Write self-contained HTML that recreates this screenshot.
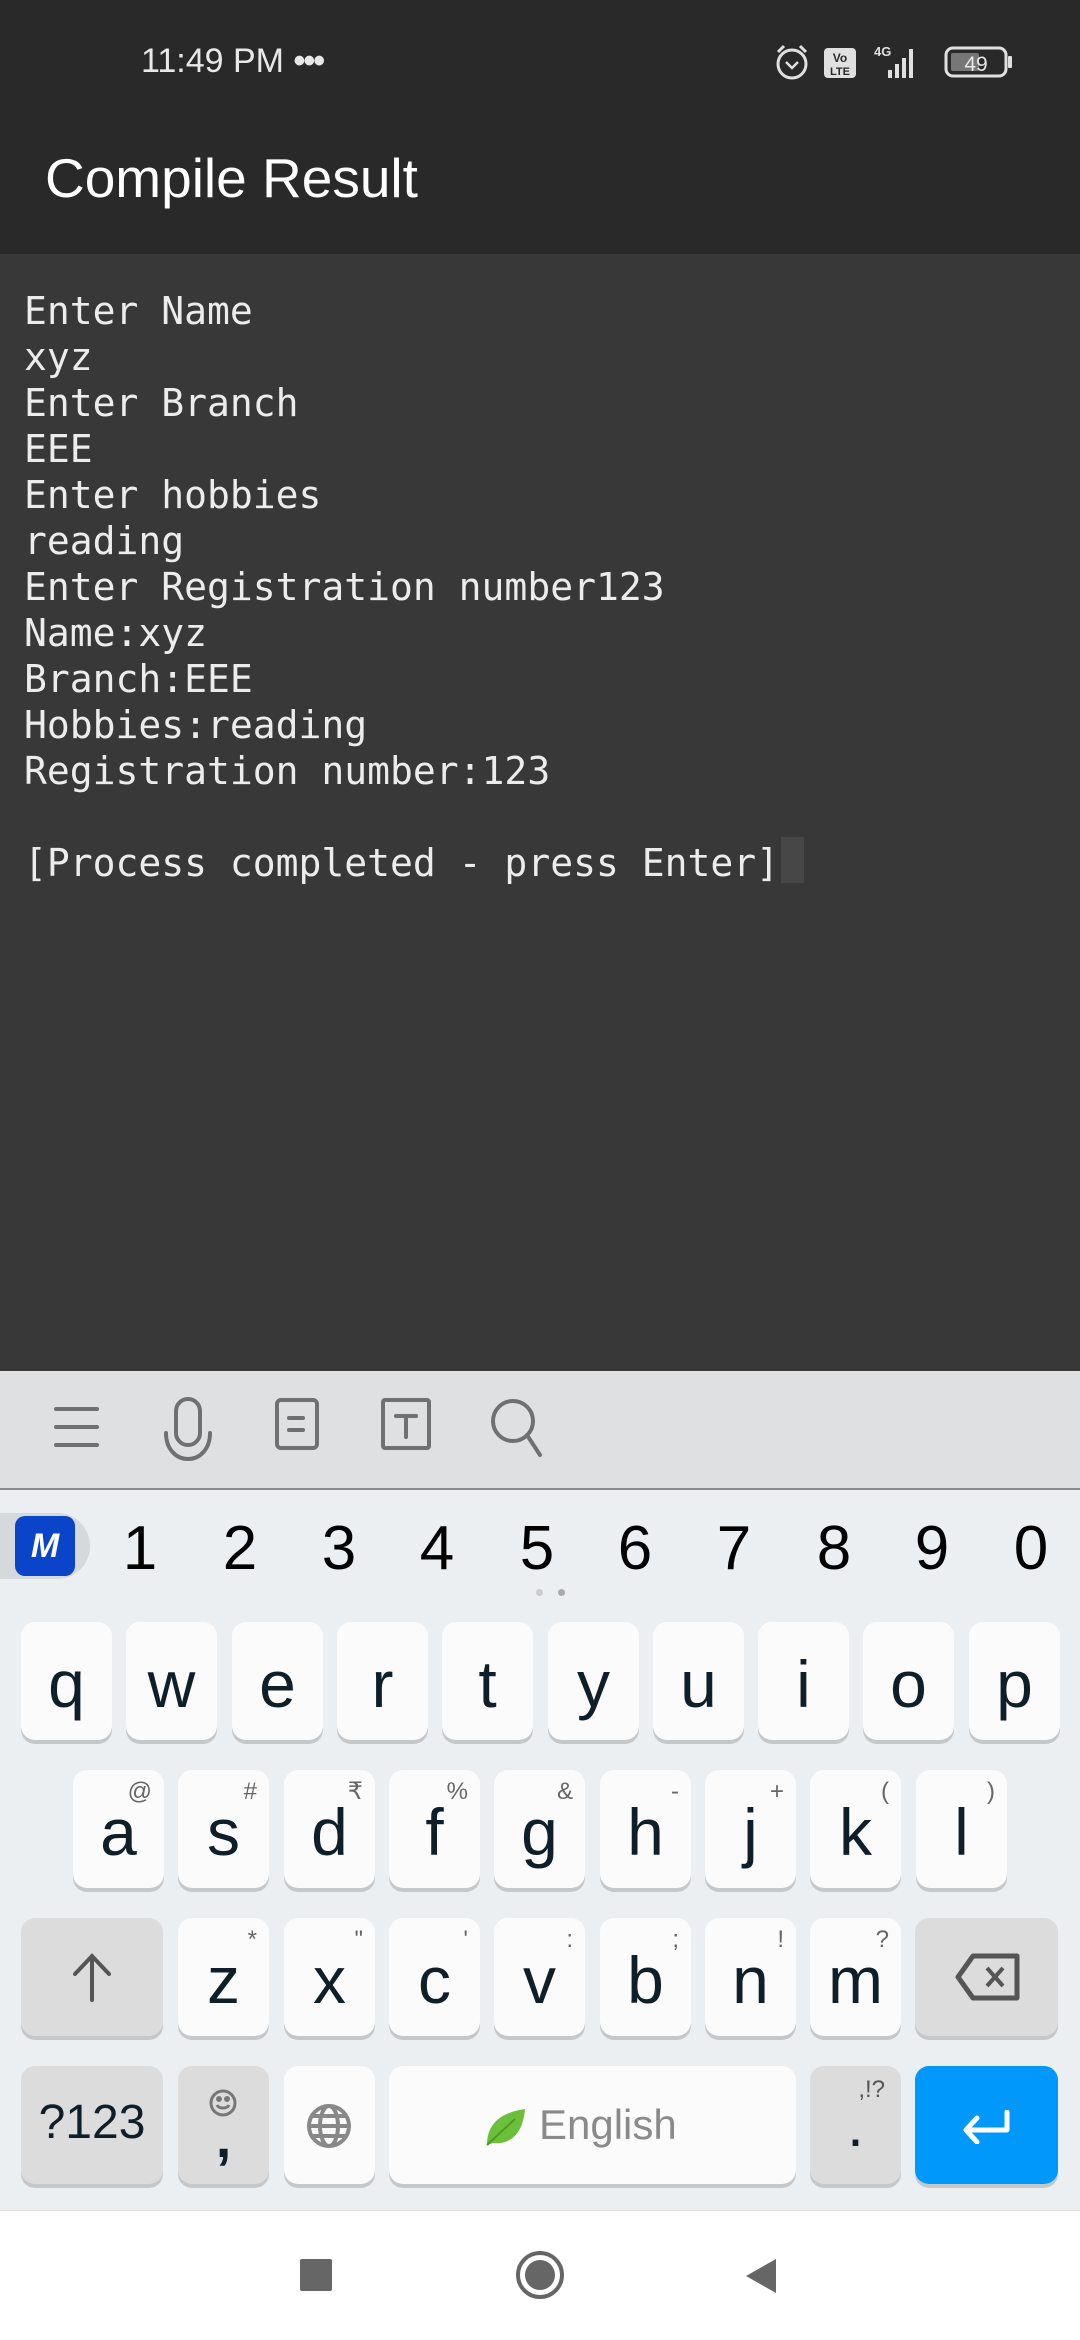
<!DOCTYPE html>
<html><head><meta charset="utf-8"><style>
*{margin:0;padding:0;box-sizing:border-box}
body{width:1080px;height:2340px;position:relative;overflow:hidden;background:#383838;font-family:"Liberation Sans",sans-serif}
.abs{position:absolute}
#hdr{left:0;top:0;width:1080px;height:254px;background:#292929}
#term{left:24px;top:288px;font-family:"DejaVu Sans Mono","Liberation Mono",monospace;font-size:38px;line-height:46px;color:#ececec;white-space:pre;letter-spacing:0}
#kb{left:0;top:1371px;width:1080px;height:839px;background:#ebeff2}
#tb{left:0;top:1371px;width:1080px;height:119px;background:#dfe0e2;border-bottom:2px solid #8a8a8a}
.k{position:absolute;width:91px;height:118px;background:#fbfbfb;border-radius:14px;box-shadow:0 4px 0 #c5c8cb;text-align:center;color:#0f1f2a;font-size:66px;line-height:1}
.k span.l{position:absolute;left:0;right:0;top:29px}
.k span.h{position:absolute;right:12px;top:10px;font-size:24px;color:#666}
.g{background:#dcdcdc}
.d{position:absolute;top:1513px;font-size:62px;color:#000;width:60px;text-align:center}
#nav{left:0;top:2210px;width:1080px;height:130px;background:#fff;border-top:1px solid #e0e0e0}
</style></head><body>
<div id="hdr" class="abs"></div>
<div class="abs" style="left:141px;top:42px;font-size:34px;color:#e8e8e8;">11:49 PM <span style="letter-spacing:-2px;font-weight:bold">•••</span></div>
<svg class="abs" style="left:770px;top:40px" width="250" height="45" viewBox="0 0 250 45">
 <circle cx="22" cy="24" r="14" fill="none" stroke="#e0e0e0" stroke-width="3"/>
 <path d="M16 22l6 6 6-6" fill="none" stroke="#e0e0e0" stroke-width="2.5"/>
 <path d="M8 12l6-6M36 12l-6-6" stroke="#e0e0e0" stroke-width="3"/>
 <rect x="54" y="8" width="32" height="30" rx="4" fill="#e0e0e0"/>
 <text x="70" y="22" font-size="12" text-anchor="middle" fill="#292929" font-weight="bold" font-family="Liberation Sans">Vo</text>
 <text x="70" y="35" font-size="11" text-anchor="middle" fill="#292929" font-weight="bold" font-family="Liberation Sans">LTE</text>
 <text x="104" y="16" font-size="13" fill="#e0e0e0" font-weight="bold" font-family="Liberation Sans">4G</text>
 <rect x="118" y="30" width="4" height="8" fill="#e0e0e0"/><rect x="125" y="24" width="4" height="14" fill="#e0e0e0"/><rect x="132" y="18" width="4" height="20" fill="#e0e0e0"/><rect x="139" y="9" width="4" height="29" fill="#e0e0e0"/>
 <rect x="176" y="8" width="60" height="28" rx="7" fill="none" stroke="#e0e0e0" stroke-width="3"/>
 <rect x="181" y="13" width="28" height="18" rx="2" fill="#777"/>
 <rect x="238" y="16" width="4" height="12" rx="1" fill="#e0e0e0"/>
 <text x="206" y="31" font-size="21" text-anchor="middle" fill="#e8e8e8" font-family="Liberation Sans">49</text>
</svg>
<div class="abs" style="left:45px;top:146px;font-size:55px;color:#fff;">Compile Result</div>
<div id="term" class="abs">Enter Name
xyz
Enter Branch
EEE
Enter hobbies
reading
Enter Registration number123
Name:xyz
Branch:EEE
Hobbies:reading
Registration number:123

[Process completed - press Enter]</div>
<div class="abs" style="left:781px;top:837px;width:23px;height:46px;background:#474747"></div>

<div id="kb" class="abs"></div>
<div id="tb" class="abs"></div>
<svg class="abs" style="left:0;top:1371px" width="600" height="119" viewBox="0 0 600 119" fill="none" stroke="#707070" stroke-width="4" stroke-linecap="round">
 <path d="M56 38h41M56 56h41M56 74h41"/>
 <rect x="176" y="28" width="24" height="46" rx="12"/>
 <path d="M166 62c0 16 10 26 22 26s22-10 22-26"/>
 <rect x="277" y="29" width="40" height="48" rx="4"/>
 <path d="M289 47h14M289 59h14"/>
 <rect x="383" y="29" width="46" height="48" rx="2"/>
 <path d="M396 45h20M406 45v21"/>
 <circle cx="513" cy="50" r="20"/>
 <path d="M527 64l13 20"/>
</svg>
<div class="abs" style="left:0;top:1513px;width:90px;height:66px;background:#d6d9dc;border-radius:0 33px 33px 0"></div>
<div class="abs" style="left:15px;top:1516px;width:60px;height:60px;background:#0a44c8;border-radius:10px;color:#fff;font-weight:bold;font-style:italic;font-size:34px;text-align:center;line-height:60px">M</div>
<div class="d" style="left:110px">1</div><div class="d" style="left:210px">2</div><div class="d" style="left:309px">3</div><div class="d" style="left:407px">4</div><div class="d" style="left:507px">5</div><div class="d" style="left:605px">6</div><div class="d" style="left:704px">7</div><div class="d" style="left:804px">8</div><div class="d" style="left:902px">9</div><div class="d" style="left:1001px">0</div>
<div class="abs" style="left:536px;top:1589px;width:7px;height:7px;border-radius:50%;background:#ccc"></div>
<div class="abs" style="left:558px;top:1589px;width:7px;height:7px;border-radius:50%;background:#aaa"></div>

<div class="k" style="left:21px;top:1622px"><span class="l">q</span></div>
<div class="k" style="left:126px;top:1622px"><span class="l">w</span></div>
<div class="k" style="left:232px;top:1622px"><span class="l">e</span></div>
<div class="k" style="left:337px;top:1622px"><span class="l">r</span></div>
<div class="k" style="left:442px;top:1622px"><span class="l">t</span></div>
<div class="k" style="left:548px;top:1622px"><span class="l">y</span></div>
<div class="k" style="left:653px;top:1622px"><span class="l">u</span></div>
<div class="k" style="left:758px;top:1622px"><span class="l">i</span></div>
<div class="k" style="left:863px;top:1622px"><span class="l">o</span></div>
<div class="k" style="left:969px;top:1622px"><span class="l">p</span></div>

<div class="k" style="left:73px;top:1770px"><span class="h">@</span><span class="l">a</span></div>
<div class="k" style="left:178px;top:1770px"><span class="h">#</span><span class="l">s</span></div>
<div class="k" style="left:284px;top:1770px"><span class="h">₹</span><span class="l">d</span></div>
<div class="k" style="left:389px;top:1770px"><span class="h">%</span><span class="l">f</span></div>
<div class="k" style="left:494px;top:1770px"><span class="h">&amp;</span><span class="l">g</span></div>
<div class="k" style="left:600px;top:1770px"><span class="h">-</span><span class="l">h</span></div>
<div class="k" style="left:705px;top:1770px"><span class="h">+</span><span class="l">j</span></div>
<div class="k" style="left:810px;top:1770px"><span class="h">(</span><span class="l">k</span></div>
<div class="k" style="left:916px;top:1770px"><span class="h">)</span><span class="l">l</span></div>

<div class="k g" style="left:21px;top:1918px;width:142px"><svg style="position:absolute;left:48px;top:34px" width="46" height="50" viewBox="0 0 46 50" fill="none" stroke="#555" stroke-width="4" stroke-linecap="round"><path d="M23 48V4M6 22L23 4l17 18"/></svg></div>
<div class="k" style="left:178px;top:1918px"><span class="h">*</span><span class="l">z</span></div>
<div class="k" style="left:284px;top:1918px"><span class="h">"</span><span class="l">x</span></div>
<div class="k" style="left:389px;top:1918px"><span class="h">'</span><span class="l">c</span></div>
<div class="k" style="left:494px;top:1918px"><span class="h">:</span><span class="l">v</span></div>
<div class="k" style="left:600px;top:1918px"><span class="h">;</span><span class="l">b</span></div>
<div class="k" style="left:705px;top:1918px"><span class="h">!</span><span class="l">n</span></div>
<div class="k" style="left:810px;top:1918px"><span class="h">?</span><span class="l">m</span></div>
<div class="k g" style="left:915px;top:1918px;width:143px"><svg style="position:absolute;left:38px;top:34px" width="70" height="50" viewBox="0 0 70 50" fill="none" stroke="#555" stroke-width="5" stroke-linejoin="round"><path d="M20 4h44v42H20L5 25z"/><path d="M34 16l16 18M50 16L34 34" stroke-width="4"/></svg></div>

<div class="k g" style="left:21px;top:2066px;width:142px"><span class="l" style="top:33px;font-size:48px">?123</span></div>
<div class="k g" style="left:178px;top:2066px"><svg style="position:absolute;left:30px;top:22px" width="30" height="30" viewBox="0 0 30 30" fill="none" stroke="#777" stroke-width="3"><circle cx="15" cy="15" r="12"/><path d="M9 17c2 4 10 4 12 0"/><circle cx="11" cy="11" r="1.5" fill="#777"/><circle cx="19" cy="11" r="1.5" fill="#777"/></svg><span class="l" style="top:44px;font-size:56px;font-weight:bold">,</span></div>
<div class="k" style="left:284px;top:2066px"><svg style="position:absolute;left:22px;top:37px" width="46" height="46" viewBox="0 0 46 46" fill="none" stroke="#888" stroke-width="4"><circle cx="23" cy="23" r="20"/><ellipse cx="23" cy="23" rx="9" ry="20"/><path d="M3 23h40M6 13h34M6 33h34"/></svg></div>
<div class="k" style="left:389px;top:2066px;width:407px"><svg style="position:absolute;left:96px;top:41px" width="42" height="40" viewBox="0 0 42 40"><path d="M2 38C2 20 12 6 40 2 38 26 26 38 8 36z" fill="#6cbf3a"/><path d="M2 38L30 12" stroke="#4c9a24" stroke-width="2"/></svg><span class="l" style="top:38px;left:150px;right:auto;font-size:42px;color:#8a8a8a">English</span></div>
<div class="k g" style="left:810px;top:2066px"><span class="h" style="top:12px;right:16px;color:#555">,!?</span><span class="l" style="top:30px;font-size:60px">.</span></div>
<div class="k" style="left:915px;top:2066px;width:143px;background:#0098fa;box-shadow:0 4px 0 #c5c8cb"><svg style="position:absolute;left:46px;top:44px" width="52" height="34" viewBox="0 0 52 34" fill="none" stroke="#fff" stroke-width="5" stroke-linecap="round" stroke-linejoin="round"><path d="M46 2v18H6M16 8L5 20l11 12"/></svg></div>

<div id="nav" class="abs"></div>
<div class="abs" style="left:300px;top:2259px;width:32px;height:32px;background:#666;border-radius:2px"></div>
<div class="abs" style="left:516px;top:2251px;width:48px;height:48px;border:4px solid #666;border-radius:50%"><div style="margin:5px;width:30px;height:30px;background:#666;border-radius:50%"></div></div>
<svg class="abs" style="left:744px;top:2257px" width="34" height="38" viewBox="0 0 34 38"><path d="M32 2v34L2 19z" fill="#666"/></svg>
</body></html>
